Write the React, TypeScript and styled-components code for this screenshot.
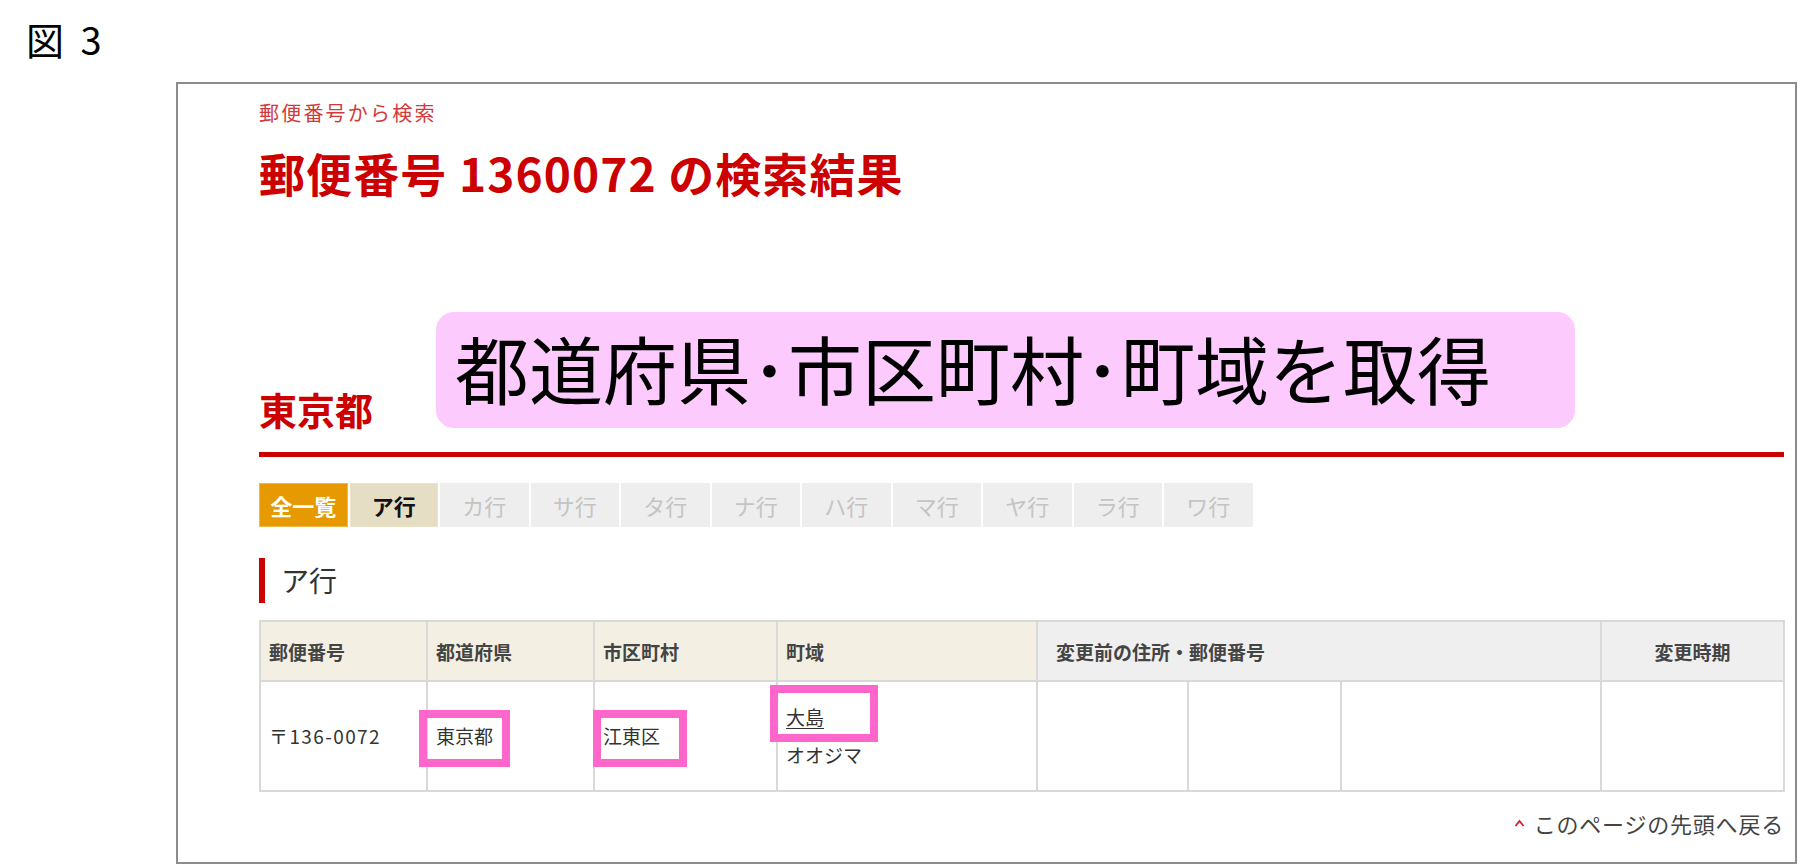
import styled, { createGlobalStyle } from "styled-components";

const GlobalStyle = createGlobalStyle`
  html, body {
    margin: 0;
    padding: 0;
    background: #ffffff;
  }
  body {
    font-family: "Noto Sans CJK JP", "Noto Sans", sans-serif;
    color: #333333;
  }
`;

type TabKind = "all" | "active" | "off";

const TABS: { label: string; kind: TabKind }[] = [
  { label: "全一覧", kind: "all" },
  { label: "ア行", kind: "active" },
  { label: "カ行", kind: "off" },
  { label: "サ行", kind: "off" },
  { label: "タ行", kind: "off" },
  { label: "ナ行", kind: "off" },
  { label: "ハ行", kind: "off" },
  { label: "マ行", kind: "off" },
  { label: "ヤ行", kind: "off" },
  { label: "ラ行", kind: "off" },
  { label: "ワ行", kind: "off" },
];

// 列幅 (郵便番号, 都道府県, 市区町村, 町域, 変更前 x3, 変更時期)
const COL_WIDTHS = [167, 167, 183, 260, 151, 153, 260, 183];

export default function App() {
  return (
    <Page>
      <GlobalStyle />
      <FigureLabel>図 3</FigureLabel>

      <Frame>
        <Breadcrumb>郵便番号から検索</Breadcrumb>
        <PageTitle>郵便番号 1360072 の検索結果</PageTitle>

        <RegionRow>
          <PrefHeading>東京都</PrefHeading>
          <Callout>都道府県･市区町村･町域を取得</Callout>
        </RegionRow>
        <RedRule />

        <TabBar>
          {TABS.map((t) => (
            <Tab key={t.label} $kind={t.kind}>
              {t.label}
            </Tab>
          ))}
        </TabBar>

        <SectionHeading>ア行</SectionHeading>

        <ResultTable>
          <colgroup>
            {COL_WIDTHS.map((w, i) => (
              <Col key={i} $w={w} />
            ))}
          </colgroup>
          <thead>
            <tr>
              <HeadCell $tone="beige">郵便番号</HeadCell>
              <HeadCell $tone="beige">都道府県</HeadCell>
              <HeadCell $tone="beige">市区町村</HeadCell>
              <HeadCell $tone="beige">町域</HeadCell>
              <HeadCell $tone="gray" colSpan={3} $pad={18}>
                変更前の住所・郵便番号
              </HeadCell>
              <HeadCell $tone="gray" $align="center">
                変更時期
              </HeadCell>
            </tr>
          </thead>
          <tbody>
            <tr>
              <BodyCell $spaced>〒136-0072</BodyCell>
              <BodyCell>
                <Mark $l={17} $r={17} $t={14} $b={19}>
                  東京都
                </Mark>
              </BodyCell>
              <BodyCell>
                <Mark $l={10} $r={27} $t={14} $b={19}>
                  江東区
                </Mark>
              </BodyCell>
              <BodyCell>
                <Mark $l={16} $r={54} $t={20} $b={13} $link>
                  大島
                </Mark>
                <Kana>オオジマ</Kana>
              </BodyCell>
              <BodyCell />
              <BodyCell />
              <BodyCell />
              <BodyCell />
            </tr>
          </tbody>
        </ResultTable>

        <BackToTop>
          <svg width="11" height="8" viewBox="0 0 11 8">
            <polyline
              points="1.5,7 5.5,2 9.5,7"
              fill="none"
              stroke="#e0262e"
              strokeWidth="2"
            />
          </svg>
          このページの先頭へ戻る
        </BackToTop>
      </Frame>
    </Page>
  );
}

const Page = styled.div`
  width: 1798px;
  height: 865px;
  box-sizing: border-box;
  padding: 16px 0 0 26px;
  overflow: hidden;
`;

const FigureLabel = styled.div`
  font-size: 38px;
  line-height: 46px;
  letter-spacing: 4px;
  color: #000000;
`;

const Frame = styled.section`
  box-sizing: border-box;
  width: 1621px;
  height: 782px;
  margin: 20px 0 0 150px;
  border: 2px solid #8c8c8c;
  padding: 17px 11px 0 81px;
  display: flex;
  flex-direction: column;
`;

const Breadcrumb = styled.div`
  font-size: 20px;
  line-height: 24px;
  letter-spacing: 2.2px;
  color: #d03a3a;
`;

const PageTitle = styled.h1`
  margin: 19px 0 0;
  font-size: 46px;
  line-height: 56px;
  letter-spacing: 1.1px;
  font-weight: 700;
  color: #cc0000;
`;

const RegionRow = styled.div`
  display: flex;
  align-items: flex-end;
  margin-top: 112px;
`;

const PrefHeading = styled.h2`
  margin: 0;
  font-size: 38px;
  line-height: 38px;
  font-weight: 700;
  color: #cc0000;
`;

const Callout = styled.div`
  box-sizing: border-box;
  display: flex;
  align-items: center;
  width: 1139px;
  height: 116px;
  margin-left: 63px;
  padding: 0 0 6px 19px;
  background: #fccafc;
  border-radius: 18px;
  font-size: 74px;
  line-height: 1;
  color: #000000;
  white-space: nowrap;
`;

const RedRule = styled.div`
  height: 5px;
  margin-top: 24px;
  background: #cc0000;
`;

const TabBar = styled.div`
  display: flex;
  gap: 2px;
  margin-top: 26px;
`;

const Tab = styled.div<{ $kind: TabKind }>`
  box-sizing: border-box;
  width: 88.5px;
  height: 44px;
  display: flex;
  align-items: center;
  justify-content: center;
  font-size: 22px;
  font-weight: ${(p) => (p.$kind === "off" ? 400 : 700)};
  background: ${(p) =>
    p.$kind === "all" ? "#e69900" : p.$kind === "active" ? "#e6dec4" : "#eeeeee"};
  color: ${(p) =>
    p.$kind === "all" ? "#ffffff" : p.$kind === "active" ? "#111111" : "#c4c4c4"};
  border: 1px solid
    ${(p) =>
      p.$kind === "all" ? "#f0b84a" : p.$kind === "active" ? "#ece2c6" : "#eeeeee"};
`;

const SectionHeading = styled.h3`
  margin: 31px 0 0;
  height: 45px;
  border-left: 6px solid #cc0000;
  padding-left: 16px;
  font-size: 28px;
  line-height: 45px;
  font-weight: 400;
  color: #333333;
`;

const ResultTable = styled.table`
  width: 1524px;
  margin-top: 17px;
  table-layout: fixed;
  border-collapse: collapse;
`;

const Col = styled.col<{ $w: number }>`
  width: ${(p) => p.$w}px;
`;

const HeadCell = styled.th<{
  $tone: "beige" | "gray";
  $align?: "left" | "center";
  $pad?: number;
}>`
  height: 58px;
  padding: 0 ${(p) => p.$pad ?? 8}px;
  border: 2px solid #d9d9d9;
  background: ${(p) => (p.$tone === "beige" ? "#f3f0e3" : "#efefef")};
  text-align: ${(p) => p.$align ?? "left"};
  font-size: 19px;
  font-weight: 700;
  color: #444444;
`;

const BodyCell = styled.td<{ $spaced?: boolean }>`
  height: 108px;
  padding: 0 8px;
  border: 2px solid #d9d9d9;
  vertical-align: middle;
  font-size: 19px;
  line-height: 24px;
  color: #333333;
  letter-spacing: ${(p) => (p.$spaced ? "1.4px" : "0")};
`;

// 注釈用のピンク枠 (テキストの上に重ねる)
const Mark = styled.span<{
  $l: number;
  $r: number;
  $t: number;
  $b: number;
  $link?: boolean;
}>`
  position: relative;
  display: inline-block;
  line-height: 24px;
  text-decoration: ${(p) => (p.$link ? "underline" : "none")};
  text-underline-offset: 3px;

  &::after {
    content: "";
    position: absolute;
    left: -${(p) => p.$l}px;
    right: -${(p) => p.$r}px;
    top: -${(p) => p.$t}px;
    bottom: -${(p) => p.$b}px;
    border: 8px solid #ff66cc;
  }
`;

const Kana = styled.div`
  margin-top: 14px;
  line-height: 24px;
`;

const BackToTop = styled.div`
  display: flex;
  align-items: center;
  justify-content: flex-end;
  gap: 9px;
  margin-top: 18px;
  font-size: 22px;
  line-height: 26px;
  letter-spacing: 0.8px;
  color: #444444;
`;
